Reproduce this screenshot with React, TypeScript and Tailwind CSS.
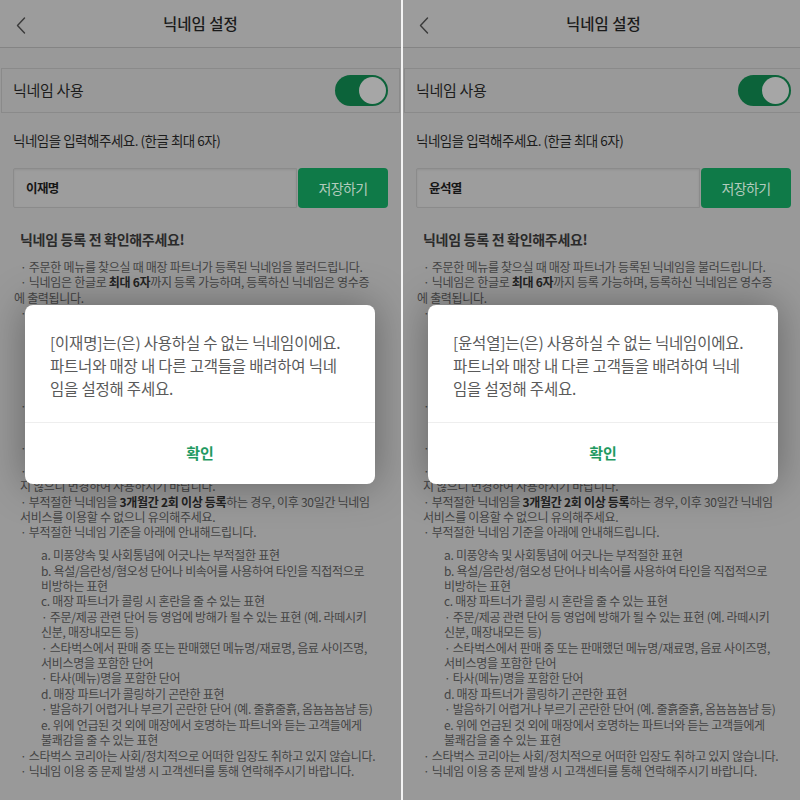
import React from "react";

type LineProps = { children: React.ReactNode; sub?: boolean; className?: string };

function Line({ children, sub = false, className = "" }: LineProps) {
  return <div className={`whitespace-nowrap ${sub ? "pl-[21px]" : ""} ${className}`}>{children}</div>;
}

function Toggle() {
  return (
    <div className="w-[53px] h-[31px] rounded-full bg-[#0c633a] p-[2px] flex justify-end">
      <div className="w-[27px] h-[27px] rounded-full bg-[#a6a6a6]" />
    </div>
  );
}

function NicknameDialog({ name }: { name: string }) {
  return (
    <div className="absolute left-[25px] top-[305px] w-[350px] rounded-[8px] bg-white shadow-[0_0_40px_rgba(0,0,0,0.35)]">
      <div className="px-[25px] pt-[26px] pb-[22px] text-[15.5px] leading-[23px] tracking-[-0.2px] text-[#5a5a5a]">
        <p className="whitespace-nowrap">[{name}]는(은) 사용하실 수 없는 닉네임이에요.</p>
        <p className="whitespace-nowrap">파트너와 매장 내 다른 고객들을 배려하여 닉네</p>
        <p className="whitespace-nowrap">임을 설정해 주세요.</p>
      </div>
      <button className="w-full h-[62px] border-t border-[#eeeeee] text-[15px] font-bold text-[#1f9a62]">
        확인
      </button>
    </div>
  );
}

function Panel({ name }: { name: string }) {
  return (
    <div className="relative w-[401px] h-[800px] shrink-0 overflow-hidden bg-[#999999]">
      {/* top bar */}
      <header className="relative h-[48px] flex items-center justify-center bg-[#9c9c9c] border-b border-[#848484]">
        <svg className="absolute left-[16px] top-[17px]" width="10" height="17" viewBox="0 0 10 17" fill="none">
          <path d="M8.5 1 L1.5 8.5 L8.5 16" stroke="#3a3a3a" strokeWidth="1.4" strokeLinecap="round" strokeLinejoin="round" />
        </svg>
        <h1 className="text-[15.5px] font-medium text-[#1a1a1a]">닉네임 설정</h1>
      </header>

      {/* use toggle */}
      <div className="mt-[20px] mx-px h-[45px] border border-[#8a8a8a] flex items-center justify-between pl-[11px] pr-[11px]">
        <span className="text-[15px] tracking-[-0.3px] text-[#1c1c1c]">닉네임 사용</span>
        <Toggle />
      </div>

      <p className="pt-[17px] px-[13px] text-[13.5px] leading-[20px] tracking-[-0.5px] text-[#1c1c1c]">
        닉네임을 입력해주세요. (한글 최대 6자)
      </p>

      <div className="mt-[18px] mx-[13px] h-[40px] flex">
        <div className="flex-1 flex items-center pl-[12px] bg-[#9d9d9d] border border-[#8b8b8b] rounded-l-[2px] shadow-[inset_0_1px_2px_rgba(0,0,0,0.08)]">
          <span className="text-[12.5px] font-bold tracking-[-0.6px] text-[#161616]">{name}</span>
        </div>
        <button className="w-[90px] ml-px rounded-[4px] bg-[#0f7a48] text-[14px] tracking-[-0.6px] text-[#b3cbbd]">
          저장하기
        </button>
      </div>

      <h2 className="mt-[21px] px-[20px] text-[14px] leading-[20px] font-bold tracking-[-0.3px] text-[#2a2a2a]">
        닉네임 등록 전 확인해주세요!
      </h2>

      <div className="mt-[10px] px-[20px] text-[12px] leading-[15.4px] tracking-[-0.3px] text-[#444]">
        <Line>· 주문한 메뉴를 찾으실 때 매장 파트너가 등록된 닉네임을 불러드립니다.</Line>
        <Line>
          · 닉네임은 한글로 <b className="font-bold text-[#222]">최대 6자</b>까지 등록 가능하며, 등록하신 닉네임은 영수증
        </Line>
        <Line className="-ml-[6px]">에 출력됩니다.</Line>

        {/* middle of the notice: only the bullet marks stick out left of the dialog */}
        <div className="h-[173px] overflow-hidden">
          <div className="h-[15.4px]">·</div>
          <div className="h-[77px]" />
          <div className="h-[15.4px]">·</div>
          <div className="h-[27px]" />
          <div className="h-[15.4px]">·</div>
          <div className="h-[8px]" />
          <div className="h-[15.4px]">·</div>
        </div>

        <Line>지 않으니 변경하여 사용하시기 바랍니다.</Line>
        <Line>
          · 부적절한 닉네임을 <b className="font-bold text-[#222]">3개월간 2회 이상 등록</b>하는 경우, 이후 30일간 닉네임
        </Line>
        <Line>서비스를 이용할 수 없으니 유의해주세요.</Line>
        <Line>· 부적절한 닉네임 기준을 아래에 안내해드립니다.</Line>

        <div className="mt-[7.4px]">
          <Line sub>a. 미풍양속 및 사회통념에 어긋나는 부적절한 표현</Line>
          <Line sub>b. 욕설/음란성/혐오성 단어나 비속어를 사용하여 타인을 직접적으로</Line>
          <Line sub>비방하는 표현</Line>
          <Line sub>c. 매장 파트너가 콜링 시 혼란을 줄 수 있는 표현</Line>
          <Line sub>· 주문/제공 관련 단어 등 영업에 방해가 될 수 있는 표현 (예. 라떼시키</Line>
          <Line sub>신분, 매장내모든 등)</Line>
          <Line sub>· 스타벅스에서 판매 중 또는 판매했던 메뉴명/재료명, 음료 사이즈명,</Line>
          <Line sub>서비스명을 포함한 단어</Line>
          <Line sub>· 타사(메뉴)명을 포함한 단어</Line>
          <Line sub>d. 매장 파트너가 콜링하기 곤란한 표현</Line>
          <Line sub>· 발음하기 어렵거나 부르기 곤란한 단어 (예. 줄흙줄흙, 옴뇸뇸뇸냠 등)</Line>
          <Line sub>e. 위에 언급된 것 외에 매장에서 호명하는 파트너와 듣는 고객들에게</Line>
          <Line sub>불쾌감을 줄 수 있는 표현</Line>
        </div>
        <Line>· 스타벅스 코리아는 사회/정치적으로 어떠한 입장도 취하고 있지 않습니다.</Line>
        <Line>· 닉네임 이용 중 문제 발생 시 고객센터를 통해 연락해주시기 바랍니다.</Line>
      </div>

      <NicknameDialog name={name} />
    </div>
  );
}

export default function App() {
  return (
    <div className="w-[800px] h-[800px] flex overflow-hidden bg-white font-['Noto_Sans_CJK_KR','Noto_Sans',sans-serif]">
      <Panel name="이재명" />
      <div className="w-[2px] shrink-0 bg-[#f4f4f4]" />
      <Panel name="윤석열" />
    </div>
  );
}
